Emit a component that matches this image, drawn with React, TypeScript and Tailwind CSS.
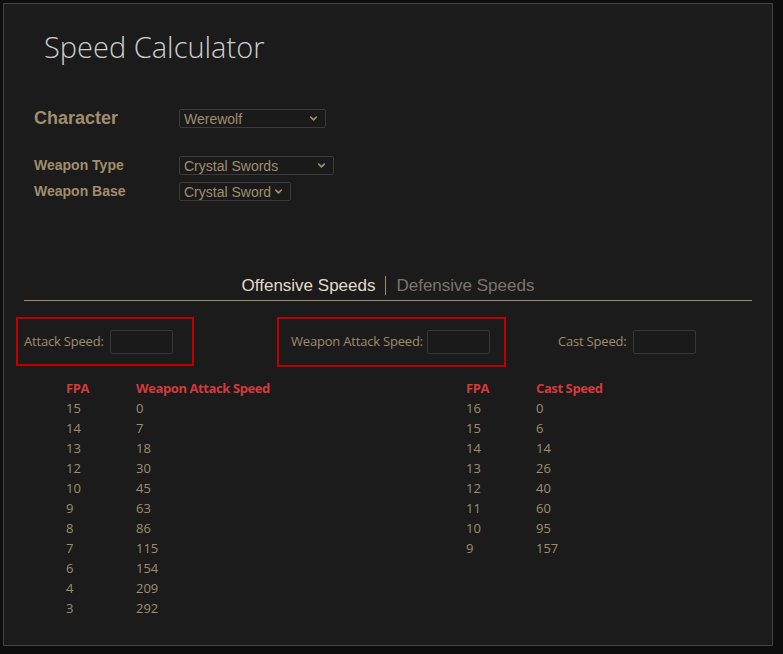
import { ChevronDown } from "lucide-react";

const attackRows: [number, number][] = [
  [15, 0],
  [14, 7],
  [13, 18],
  [12, 30],
  [10, 45],
  [9, 63],
  [8, 86],
  [7, 115],
  [6, 154],
  [4, 209],
  [3, 292],
];

const castRows: [number, number][] = [
  [16, 0],
  [15, 6],
  [14, 14],
  [13, 26],
  [12, 40],
  [11, 60],
  [10, 95],
  [9, 157],
];

function FakeSelect({ value, width }: { value: string; width: string }) {
  return (
    <div
      className={`flex h-[19px] items-center justify-between whitespace-nowrap rounded-[2px] border border-[#3b3b3b] bg-[#1a1a1a] pl-[4px] pr-[6px] font-['Liberation_Sans',sans-serif] text-[14px] font-normal text-[#a28d6c] ${width}`}
    >
      <span className="leading-none">{value}</span>
      <ChevronDown size={11} strokeWidth={3.5} className="text-[#a28d6c]" />
    </div>
  );
}

function SpeedInput() {
  return <div className="h-[24px] w-[63px] rounded-[2px] border border-[#363636] bg-[#1a1a1a]" />;
}

function SpeedTable({ title, rows }: { title: string; rows: [number, number][] }) {
  return (
    <div className="font-['Open_Sans',sans-serif] text-[13px]">
      <div className="flex h-[20px] items-center font-bold tracking-[-0.4px] text-[#d43a3a]">
        <span className="w-[70px]">FPA</span>
        <span>{title}</span>
      </div>
      {rows.map(([fpa, speed]) => (
        <div key={fpa} className="flex h-[20px] items-center text-[#a08c6c]">
          <span className="w-[70px]">{fpa}</span>
          <span>{speed}</span>
        </div>
      ))}
    </div>
  );
}

export default function App() {
  return (
    <div className="min-h-screen bg-[#0d0d0d] pl-[3px] pt-[3px]">
      <div className="h-[643px] w-[770px] border border-[#424242] bg-[#1b1b1b]">
        <h1 className="ml-[40px] mt-[25px] font-['Open_Sans',sans-serif] text-[29px] font-light leading-[36px] text-[#cdcdcd]">
          Speed Calculator
        </h1>

        <div className="ml-[30px] mt-[40px] font-['Liberation_Sans',sans-serif] font-bold text-[#a28d6c]">
          <div className="flex items-center">
            <span className="w-[145px] text-[18px]">Character</span>
            <FakeSelect value="Werewolf" width="w-[147px]" />
          </div>
          <div className="mt-[23px] flex items-center">
            <span className="w-[145px] text-[14px]">Weapon Type</span>
            <FakeSelect value="Crystal Swords" width="w-[155px]" />
          </div>
          <div className="mt-[5px] flex items-center">
            <span className="w-[145px] text-[14px]">Weapon Base</span>
            <FakeSelect value="Crystal Sword" width="w-[112px]" />
          </div>
        </div>

        <div className="mx-[20px] mt-[71px] border-b border-[#a08a6a] pb-[1px]">
          <div className="flex items-center justify-center font-['Liberation_Sans',sans-serif] text-[17px]">
            <span className="text-[#e4dac8]">Offensive Speeds</span>
            <span className="mx-[10px] h-[19px] w-px bg-[#a08a6a]" />
            <span className="text-[#7c7468]">Defensive Speeds</span>
          </div>
        </div>

        <div className="ml-[12px] mt-[16px] flex items-center font-['Open_Sans',sans-serif] text-[13px] tracking-[-0.2px] text-[#a08c6c]">
          <div className="flex h-[49px] w-[178px] items-center border-2 border-[#c00000] pl-[6px]">
            <span className="w-[86px]">Attack Speed:</span>
            <SpeedInput />
          </div>
          <div className="ml-[83px] flex h-[50px] w-[229px] items-center border-2 border-[#c00000] pl-[12px]">
            <span className="w-[136px]">Weapon Attack Speed:</span>
            <SpeedInput />
          </div>
          <div className="ml-[52px] flex items-center">
            <span className="w-[75px]">Cast Speed:</span>
            <SpeedInput />
          </div>
        </div>

        <div className="ml-[62px] mt-[12px] flex">
          <div className="w-[400px]">
            <SpeedTable title="Weapon Attack Speed" rows={attackRows} />
          </div>
          <SpeedTable title="Cast Speed" rows={castRows} />
        </div>
      </div>
    </div>
  );
}
